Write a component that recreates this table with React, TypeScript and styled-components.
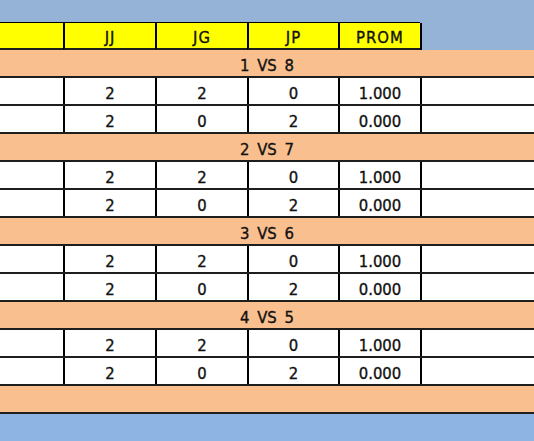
import React from "react";
import styled, { createGlobalStyle } from "styled-components";

const Global = createGlobalStyle`
  html, body { margin: 0; padding: 0; }
  body {
    background: #8eb4e3;
    font-family: "DejaVu Sans Condensed", "DejaVu Sans", sans-serif;
    font-stretch: condensed;
  }
`;

const Page = styled.div`
  width: 534px;
  height: 441px;
  display: flex;
  flex-direction: column;
  overflow: hidden;
  background: #8eb4e3;
`;

const TopBand = styled.div`
  height: 22px;
  background: #95b3d7;
  flex: none;
`;

const COLS = "63px 92px 92px 91px 82px 1fr";

const Row = styled.div<{ $bg: string }>`
  display: grid;
  grid-template-columns: ${COLS};
  height: 28px;
  box-sizing: border-box;
  border-bottom: 2px solid #1e1e1e;
  background: ${(p) => p.$bg};
  flex: none;
`;

const HeaderRow = styled(Row)`
  border-bottom: none;
`;

const textStyle = `
  font-size: 16.5px;
  color: #111;
  -webkit-text-stroke: 0.35px #111;
  padding-top: 4px;
`;

const Cell = styled.div<{ $edge?: boolean }>`
  display: flex;
  align-items: center;
  justify-content: center;
  box-sizing: border-box;
  ${textStyle}
  border-left: ${(p) => (p.$edge ? "2px solid #000" : "none")};
`;

const HeadCell = styled(Cell)`
  background: #ffff00;
  border-top: 1px solid #000;
  border-bottom: 2px solid #1e1e1e;
  letter-spacing: 1px;
`;

const TailCell = styled.div`
  border-left: 2px solid #000;
  border-bottom: 2px solid #1e1e1e;
  margin-top: 1px;
  margin-bottom: -2px;
`;

const Band = styled.div`
  height: 28px;
  box-sizing: border-box;
  background: #fabf8f;
  border-bottom: 2px solid #1e1e1e;
  display: flex;
  align-items: center;
  justify-content: center;
  ${textStyle}
  word-spacing: 3px;
  flex: none;
`;

const groups = ["1 VS 8", "2 VS 7", "3 VS 6", "4 VS 5"];
const rows = [
  ["2", "2", "0", "1.000"],
  ["2", "0", "2", "0.000"],
];

export default function App() {
  return (
    <>
      <Global />
      <Page>
        <TopBand />
        <HeaderRow $bg="#95b3d7">
          <HeadCell />
          <HeadCell $edge>JJ</HeadCell>
          <HeadCell $edge>JG</HeadCell>
          <HeadCell $edge>JP</HeadCell>
          <HeadCell $edge>PROM</HeadCell>
          <TailCell />
        </HeaderRow>
        {groups.map((g) => (
          <React.Fragment key={g}>
            <Band>{g}</Band>
            {rows.map((r, i) => (
              <Row key={i} $bg="#ffffff">
                <Cell />
                {r.map((v, j) => (
                  <Cell key={j} $edge>
                    {v}
                  </Cell>
                ))}
                <Cell $edge />
              </Row>
            ))}
          </React.Fragment>
        ))}
        <Band />
      </Page>
    </>
  );
}
